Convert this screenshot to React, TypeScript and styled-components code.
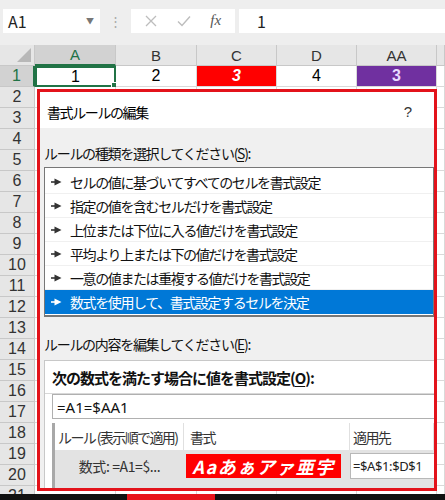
import React from 'react';
import styled, { createGlobalStyle } from 'styled-components';

const GlobalStyle = createGlobalStyle`
  html, body { margin: 0; padding: 0; background: #fff; }
  body {
    overflow: hidden;
    font-family: "Noto Sans CJK JP", "Noto Sans", sans-serif;
    color: #000;
  }
`;

const cols = [
  { name: 'A', width: 81 },
  { name: 'B', width: 81 },
  { name: 'C', width: 80 },
  { name: 'D', width: 80 },
  { name: 'AA', width: 80 },
];

const rules = [
  'セルの値に基づいてすべてのセルを書式設定',
  '指定の値を含むセルだけを書式設定',
  '上位または下位に入る値だけを書式設定',
  '平均より上または下の値だけを書式設定',
  '一意の値または重複する値だけを書式設定',
  '数式を使用して、書式設定するセルを決定',
];

const Page = styled.div`
  position: relative;
  width: 445px;
  height: 500px;
  overflow: hidden;
  background: #fff;
`;

const TopBar = styled.div`
  display: flex;
  align-items: center;
  height: 45px;
  padding: 0 0 4px 3px;
  box-sizing: border-box;
  background: #eeeeee;
`;

const NameBox = styled.div`
  display: flex;
  align-items: center;
  justify-content: space-between;
  width: 97px;
  height: 24px;
  box-sizing: border-box;
  padding: 0 6px 0 5px;
  background: #fff;
  font-size: 16px;
  color: #222;
`;

const Caret = styled.span`
  font-size: 8px;
  color: #777;
`;

const Dots = styled.div`
  width: 31px;
  text-align: center;
  color: #a8a8a8;
  font-size: 13px;
`;

const FxBox = styled.div`
  display: flex;
  align-items: center;
  justify-content: space-around;
  width: 104px;
  height: 24px;
  background: #fff;
  padding: 0 4px;
  box-sizing: border-box;
`;

const FxIcon = styled.span`
  font-family: "Liberation Serif", serif;
  font-style: italic;
  font-size: 15px;
  color: #555;
`;

const FormulaInput = styled.div`
  flex: 1;
  margin-left: 4px;
  height: 24px;
  background: #fff;
  display: flex;
  align-items: center;
  padding-left: 18px;
  font-size: 16px;
  color: #222;
`;

const Sheet = styled.div`
  display: grid;
  grid-template-columns: 35px ${cols.map((c) => `${c.width}px`).join(' ')} 1fr;
  grid-auto-rows: 21px;
  height: 449px;
  overflow: hidden;
`;

const Corner = styled.div`
  position: relative;
  background: #e6e6e6;
  border-right: 1px solid #c8c8c8;
  border-bottom: 1px solid #c8c8c8;
  box-sizing: border-box;
  &::after {
    content: '';
    position: absolute;
    right: 3px;
    bottom: 3px;
    border-style: solid;
    border-width: 0 0 14px 14px;
    border-color: transparent transparent #b8b8b8 transparent;
  }
`;

const ColHead = styled.div<{ $active?: boolean }>`
  display: flex;
  align-items: center;
  justify-content: center;
  box-sizing: border-box;
  line-height: 1;
  background: ${(p) => (p.$active ? '#d2d2d2' : '#e6e6e6')};
  border-right: 1px solid #c8c8c8;
  border-bottom: ${(p) => (p.$active ? '2px solid #217346' : '1px solid #c8c8c8')};
  color: ${(p) => (p.$active ? '#217346' : '#333')};
  font-family: "Liberation Sans", sans-serif;
  font-size: 15px;
`;

const RowHead = styled.div<{ $active?: boolean }>`
  display: flex;
  align-items: center;
  justify-content: center;
  box-sizing: border-box;
  line-height: 1;
  background: ${(p) => (p.$active ? '#d2d2d2' : '#e6e6e6')};
  border-right: ${(p) => (p.$active ? '2px solid #217346' : '1px solid #c8c8c8')};
  border-bottom: 1px solid #c8c8c8;
  color: ${(p) => (p.$active ? '#217346' : '#333')};
  font-family: "Liberation Sans", sans-serif;
  font-size: 16px;
`;

const Cell = styled.div<{ $bg?: string; $color?: string; $italic?: boolean; $bold?: boolean; $selected?: boolean }>`
  position: relative;
  display: flex;
  align-items: center;
  justify-content: center;
  box-sizing: border-box;
  line-height: 1;
  background: ${(p) => p.$bg || '#fff'};
  color: ${(p) => p.$color || '#000'};
  font-style: ${(p) => (p.$italic ? 'italic' : 'normal')};
  font-weight: ${(p) => (p.$bold ? 700 : 400)};
  font-family: "Liberation Sans", sans-serif;
  font-size: 16px;
  border-right: 1px solid #d9d9d9;
  border-bottom: 1px solid #d9d9d9;
  ${(p) =>
    p.$selected &&
    `
    border: 2px solid #217346;
    &::after {
      content: '';
      position: absolute;
      right: -4px;
      bottom: -4px;
      width: 5px;
      height: 5px;
      background: #217346;
      border: 1px solid #fff;
    }
  `}
`;

const Footer = styled.div`
  height: 6px;
  background: #111;
  display: flex;
  padding-left: 127px;
`;

const FooterMark = styled.div`
  width: 88px;
  background: #e8141b;
`;

const Dialog = styled.div`
  position: absolute;
  left: 37px;
  top: 89px;
  width: 400px;
  height: 402px;
  box-sizing: border-box;
  border: 3px solid #e3131b;
  background: #f0f0f0;
  overflow: hidden;
  display: flex;
  flex-direction: column;
`;

const TitleBar = styled.div`
  display: flex;
  align-items: center;
  justify-content: space-between;
  height: 36px;
  padding: 3px 22px 0 7px;
  box-sizing: border-box;
  background: #fff;
  font-size: 14px;
  letter-spacing: -1.4px;
`;

const Help = styled.span`
  font-family: "Liberation Sans", sans-serif;
  font-size: 15px;
  letter-spacing: 0;
  color: #333;
`;

const Body = styled.div`
  flex: 1;
  display: flex;
  flex-direction: column;
  padding: 0 0 0 4px;
`;

const Label = styled.div<{ $gap: number }>`
  margin-top: ${(p) => p.$gap}px;
  line-height: 20px;
  font-size: 14px;
  letter-spacing: -1.3px;
  color: #111;
`;

const Key = styled.span`
  text-decoration: underline;
  text-underline-offset: 2px;
`;

const RuleList = styled.div`
  margin-top: 4px;
  border: 1px solid #777;
  border-bottom-width: 2px;
  background: #fff;
  padding: 2px 0 1px;
`;

const RuleItem = styled.div<{ $selected?: boolean }>`
  display: flex;
  align-items: center;
  gap: 8px;
  height: 24px;
  box-sizing: border-box;
  padding-left: 6px;
  font-size: 14px;
  letter-spacing: -1.4px;
  background: ${(p) => (p.$selected ? '#0078d7' : '#fff')};
  color: ${(p) => (p.$selected ? '#fff' : '#111')};
  border-bottom: 1px solid ${(p) => (p.$selected ? '#0078d7' : '#f0f0f0')};
  &:last-child {
    border-bottom: none;
  }
`;

const Arrow = ({ color }: { color: string }) => (
  <svg width="11" height="8" viewBox="0 0 11 8">
    <path d="M0 4H5" stroke={color} strokeWidth="1.6" />
    <path d="M3.5 0.5L10.5 4L3.5 7.5Z" fill={color} />
  </svg>
);

const EditPanel = styled.div`
  flex: 1;
  margin-top: 6px;
  background: #fff;
  border-top: 1px solid #c8c8c8;
  border-left: 1px solid #c8c8c8;
  padding: 7px 0 0 7px;
`;

const BoldLabel = styled.div`
  line-height: 20px;
  font-size: 15px;
  font-weight: 700;
  letter-spacing: -1px;
  color: #111;
  padding: 0 0 5px 7px;
  border-bottom: 1px solid #d8d8d8;
  margin-left: -7px;
`;

const FormulaBox = styled.div`
  height: 25px;
  box-sizing: border-box;
  border: 1px solid #b0b0b0;
  border-right: none;
  display: flex;
  align-items: center;
  padding-left: 4px;
  font-family: "Noto Sans", sans-serif;
  font-size: 15px;
  color: #111;
`;

const RuleTable = styled.div`
  margin-top: 4px;
  display: grid;
  grid-template-columns: 129px 166px 1fr;
  grid-template-rows: 27px 38px;
  border-left: 3px solid #a8a8a8;
`;

const HeadCell = styled.div<{ $pad: number }>`
  display: flex;
  align-items: center;
  padding-left: ${(p) => p.$pad}px;
  background: #fff;
  border-right: 1px solid #e0e0e0;
  font-size: 14px;
  letter-spacing: -1.6px;
  white-space: pre;
  color: #333;
`;

const DataCell = styled.div<{ $center?: boolean }>`
  display: flex;
  align-items: center;
  justify-content: ${(p) => (p.$center ? 'center' : 'flex-start')};
  background: #e3e3e3;
  padding-bottom: 6px;
  font-size: 14px;
  letter-spacing: -0.4px;
  color: #333;
`;

const Preview = styled.div`
  width: 155px;
  height: 24px;
  margin-left: 2px;
  background: #ff0000;
  color: #fff;
  font-weight: 700;
  font-style: italic;
  font-size: 18px;
  letter-spacing: 1.5px;
  display: flex;
  align-items: center;
  justify-content: center;
`;

const Range = styled.div`
  flex: 1;
  height: 26px;
  box-sizing: border-box;
  border: 1px solid #b8b8b8;
  border-right: none;
  background: #fff;
  display: flex;
  align-items: center;
  padding-left: 2px;
  font-family: "Noto Sans", sans-serif;
  font-size: 13px;
  letter-spacing: -0.4px;
  color: #222;
`;

const cellProps: Record<string, { v: string; bg?: string; color?: string; italic?: boolean; bold?: boolean }> = {
  A: { v: '1' },
  B: { v: '2' },
  C: { v: '3', bg: '#ff0000', color: '#fff', italic: true, bold: true },
  D: { v: '4' },
  AA: { v: '3', bg: '#7030a0', color: '#e8dcff', bold: true },
};

export default function App() {
  const emptyRows = Array.from({ length: 20 }, (_, i) => i + 2);
  return (
    <Page>
      <GlobalStyle />
      <TopBar>
        <NameBox>
          A1
          <Caret>▼</Caret>
        </NameBox>
        <Dots>⋮</Dots>
        <FxBox>
          <svg width="12" height="12" viewBox="0 0 12 12">
            <path d="M1 1L11 11M11 1L1 11" stroke="#bdbdbd" strokeWidth="1.3" />
          </svg>
          <svg width="14" height="12" viewBox="0 0 14 12">
            <path d="M1 6.5L5 10.5L13 1.5" stroke="#bdbdbd" strokeWidth="1.4" fill="none" />
          </svg>
          <FxIcon>fx</FxIcon>
        </FxBox>
        <FormulaInput>1</FormulaInput>
      </TopBar>
      <Sheet>
        <Corner />
        {cols.map((c) => (
          <ColHead key={c.name} $active={c.name === 'A'}>
            {c.name}
          </ColHead>
        ))}
        <ColHead />
        <RowHead $active>1</RowHead>
        {cols.map((c) => {
          const p = cellProps[c.name];
          return (
            <Cell
              key={c.name}
              $bg={p.bg}
              $color={p.color}
              $italic={p.italic}
              $bold={p.bold}
              $selected={c.name === 'A'}
            >
              {p.v}
            </Cell>
          );
        })}
        <Cell />
        {emptyRows.map((r) => (
          <React.Fragment key={r}>
            <RowHead>{r}</RowHead>
            {cols.map((c) => (
              <Cell key={c.name} />
            ))}
            <Cell />
          </React.Fragment>
        ))}
      </Sheet>
      <Footer>
        <FooterMark />
      </Footer>

      <Dialog>
        <TitleBar>
          書式ルールの編集
          <Help>?</Help>
        </TitleBar>
        <Body>
          <Label $gap={15}>
            ルールの種類を選択してください(<Key>S</Key>):
          </Label>
          <RuleList>
            {rules.map((r, i) => (
              <RuleItem key={r} $selected={i === 5}>
                <Arrow color={i === 5 ? '#fff' : '#333'} />
                {r}
              </RuleItem>
            ))}
          </RuleList>
          <Label $gap={17}>
            ルールの内容を編集してください(<Key>E</Key>):
          </Label>
          <EditPanel>
            <BoldLabel>
              次の数式を満たす場合に値を書式設定(<Key>O</Key>):
            </BoldLabel>
            <FormulaBox>=A1=$AA1</FormulaBox>
            <RuleTable>
              <HeadCell $pad={3}>ルール (表示順で適用)</HeadCell>
              <HeadCell $pad={6}>書式</HeadCell>
              <HeadCell $pad={3}>適用先</HeadCell>
              <DataCell $center>数式: =A1=$...</DataCell>
              <DataCell>
                <Preview>Aaあぁアァ亜宇</Preview>
              </DataCell>
              <DataCell>
                <Range>=$A$1:$D$1</Range>
              </DataCell>
            </RuleTable>
          </EditPanel>
        </Body>
      </Dialog>
    </Page>
  );
}
